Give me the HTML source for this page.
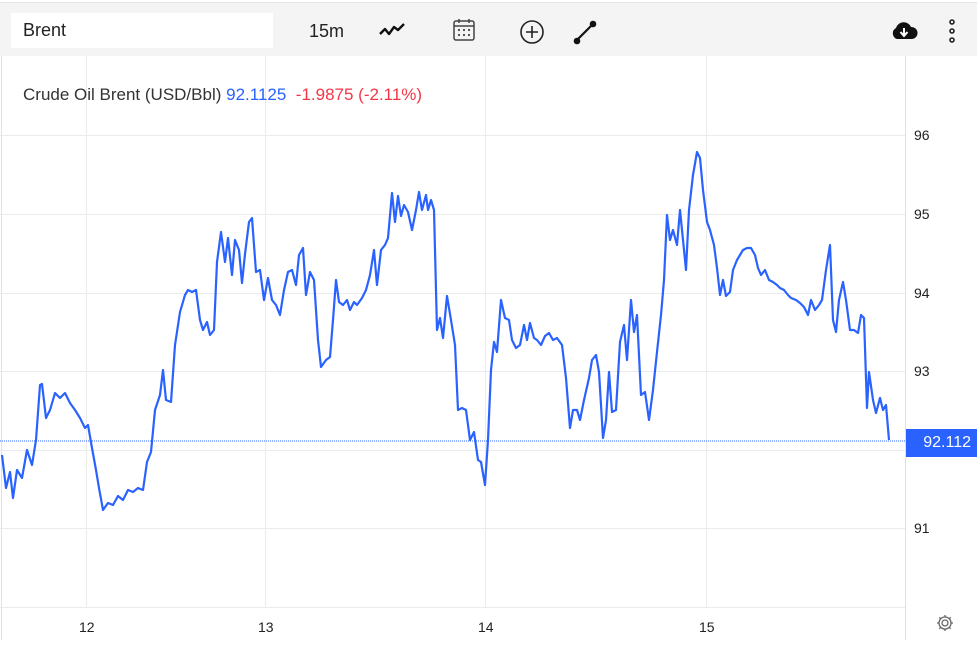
<!DOCTYPE html>
<html><head><meta charset="utf-8"><style>
body{margin:0;width:977px;height:645px;background:#fff;font-family:"Liberation Sans",Arial,sans-serif;overflow:hidden;position:relative}
.tb{position:absolute;left:0;top:2px;width:977px;height:53px;background:#f4f4f4;border-top:1px solid #e6e6e6}
.inp{position:absolute;left:11px;top:10px;width:262px;height:35px;background:#fff;font-size:18px;color:#222;line-height:35px;padding-left:12px;box-sizing:border-box}
.t{position:absolute;font-size:18px;color:#222}
.lbl{position:absolute;left:23px;top:85px;font-size:17px;color:#333}
.ax{position:absolute;font-size:14px;color:#222}
.tag{position:absolute;left:906px;top:429px;width:71px;height:28px;background:#2962ff;color:#fff;font-size:16px;line-height:28px;text-align:right;padding-right:6px;box-sizing:border-box}
</style></head><body>
<div class="tb">
<div class="inp">Brent</div>
<div class="t" style="left:309px;top:18px">15m</div>
<svg style="position:absolute;left:378px;top:18px" width="28" height="18" viewBox="0 0 28 18"><path d="M2 13 L7 8 L11 13 L16 6 L20 9 L26 3" fill="none" stroke="#111" stroke-width="2.4" stroke-linejoin="round"/></svg>
<svg style="position:absolute;left:451px;top:14px" width="26" height="26" viewBox="0 0 26 26"><rect x="3" y="4" width="20" height="19" rx="2" fill="none" stroke="#444" stroke-width="1.5"/><line x1="3" y1="9" x2="23" y2="9" stroke="#444" stroke-width="1.5"/><line x1="8" y1="2" x2="8" y2="6" stroke="#444" stroke-width="1.5"/><line x1="18" y1="2" x2="18" y2="6" stroke="#444" stroke-width="1.5"/><g fill="#444"><circle cx="8" cy="13" r="1.1"/><circle cx="13" cy="13" r="1.1"/><circle cx="18" cy="13" r="1.1"/><circle cx="8" cy="18" r="1.1"/><circle cx="13" cy="18" r="1.1"/><circle cx="18" cy="18" r="1.1"/></g></svg>
<svg style="position:absolute;left:519px;top:16px" width="26" height="26" viewBox="0 0 26 26"><circle cx="13" cy="13" r="11" fill="none" stroke="#222" stroke-width="1.6"/><path d="M13 7v12M7 13h12" stroke="#222" stroke-width="1.6"/></svg>
<svg style="position:absolute;left:571px;top:16px" width="28" height="28" viewBox="0 0 28 28"><line x1="6" y1="21" x2="22" y2="5" stroke="#111" stroke-width="2.2"/><circle cx="6" cy="22" r="3.3" fill="#111"/><circle cx="22" cy="5" r="3.3" fill="#111"/></svg>
<svg style="position:absolute;left:890px;top:17px" width="28" height="22" viewBox="0 0 28 22"><path d="M7 19 A6 6 0 0 1 6 8 A8 8 0 0 1 21 7 A6 6 0 0 1 22 19 Z" fill="#111"/><path d="M14 8v7M10.5 12l3.5 4 3.5-4" stroke="#fff" stroke-width="2" fill="none"/></svg>
<svg style="position:absolute;left:945px;top:15px" width="14" height="28" viewBox="0 0 14 28"><g fill="none" stroke="#222" stroke-width="1.6"><circle cx="7" cy="4" r="2"/><circle cx="7" cy="13" r="2"/><circle cx="7" cy="22" r="2"/></g></svg>
</div>
<svg style="position:absolute;left:0;top:0" width="977" height="645">
<line x1="1.5" y1="56" x2="1.5" y2="640" stroke="#e0e0e0"/>
<g stroke="#ebebeb" stroke-width="1">
<line x1="86.5" y1="56" x2="86.5" y2="607"/><line x1="265.5" y1="56" x2="265.5" y2="607"/><line x1="485.5" y1="56" x2="485.5" y2="607"/><line x1="706.5" y1="56" x2="706.5" y2="607"/>
<line x1="0" y1="135.5" x2="905" y2="135.5"/><line x1="0" y1="214.5" x2="905" y2="214.5"/><line x1="0" y1="293.5" x2="905" y2="293.5"/><line x1="0" y1="371.5" x2="905" y2="371.5"/><line x1="0" y1="450.5" x2="905" y2="450.5"/><line x1="0" y1="528.5" x2="905" y2="528.5"/><line x1="0" y1="607.5" x2="905" y2="607.5"/>
</g>
<line x1="905.5" y1="56" x2="905.5" y2="640" stroke="#e0e0e0"/>
<line x1="0" y1="441" x2="905" y2="441" stroke="#2962ff" stroke-width="1" stroke-dasharray="1 1"/>
<polyline fill="none" stroke="#2962ff" stroke-width="2.2" stroke-linejoin="round" points="2,455 6,488 10,472 13,498 17,470 22,478 27,450 32,465 36,440 40,385 42,384 46,418 50,410 55,393 60,398 65,393 70,403 75,410 80,418 85,428 88,425 92,448 96,470 99,488 103,510 108,503 113,505 118,496 123,500 128,490 133,492 138,488 143,490 147,462 151,452 155,410 160,395 163,370 166,400 171,402 175,345 180,312 185,295 188,290 192,292 196,290 200,320 203,330 207,322 210,335 214,330 217,262 221,232 225,262 228,238 232,275 235,240 239,250 242,283 245,254 249,222 252,218 256,272 260,270 264,300 268,278 272,300 276,305 280,315 284,290 288,272 292,270 296,285 299,255 303,248 306,295 310,272 314,280 318,340 321,367 326,360 330,357 333,320 336,280 339,302 343,305 347,300 350,310 354,302 357,305 362,298 366,290 370,275 374,250 377,285 381,250 385,245 388,238 392,193 395,222 398,196 401,216 404,205 408,212 412,230 416,210 419,192 422,210 426,195 428,210 431,200 434,210 437,330 440,318 443,338 447,296 451,320 455,345 458,410 462,408 466,410 470,440 474,432 478,460 481,462 485,485 488,440 491,370 494,342 497,352 501,300 505,318 509,320 512,340 516,348 520,345 524,325 527,340 530,323 534,338 537,340 541,345 545,336 549,333 553,340 557,338 562,345 566,378 570,428 573,410 577,410 580,420 584,400 589,378 592,360 596,355 599,372 603,438 606,420 609,372 612,412 616,410 620,342 624,325 627,360 631,300 634,332 637,315 641,395 645,392 649,420 653,390 657,352 661,315 664,280 667,215 670,240 673,230 677,245 680,210 683,240 686,270 689,210 693,175 697,152 700,158 703,190 707,222 710,230 714,245 717,268 720,295 723,280 726,296 730,292 733,270 737,260 740,255 743,250 747,248 751,248 755,255 758,268 761,275 765,270 769,280 773,282 777,285 780,288 784,290 788,295 791,298 796,300 800,303 804,307 808,315 811,300 815,310 819,305 822,300 826,270 830,245 833,320 836,332 839,300 843,282 846,300 850,330 854,330 858,333 861,315 864,318 867,408 869,372 873,400 876,413 880,398 883,410 886,405 889,440"/>
<g transform="translate(945,623)" fill="none" stroke="#666" stroke-width="1.3"><circle r="3"/><path d="M0-8v2.5M0 8v-2.5M-8 0h2.5M8 0h-2.5M-5.7-5.7l1.8 1.8M5.7 5.7l-1.8-1.8M-5.7 5.7l1.8-1.8M5.7-5.7l-1.8 1.8"/><circle r="6"/></g>
</svg>
<div class="lbl">Crude Oil Brent (USD/Bbl) <span style="color:#2962ff">92.1125</span> &nbsp;<span style="color:#f23645">-1.9875 (-2.11%)</span></div>
<div class="ax" style="left:914px;top:127px">96</div>
<div class="ax" style="left:914px;top:206px">95</div>
<div class="ax" style="left:914px;top:285px">94</div>
<div class="ax" style="left:914px;top:363px">93</div>
<div class="ax" style="left:914px;top:520px">91</div>
<div class="tag">92.112</div>
<div class="ax" style="left:79px;top:619px">12</div>
<div class="ax" style="left:258px;top:619px">13</div>
<div class="ax" style="left:478px;top:619px">14</div>
<div class="ax" style="left:699px;top:619px">15</div>
</body></html>
